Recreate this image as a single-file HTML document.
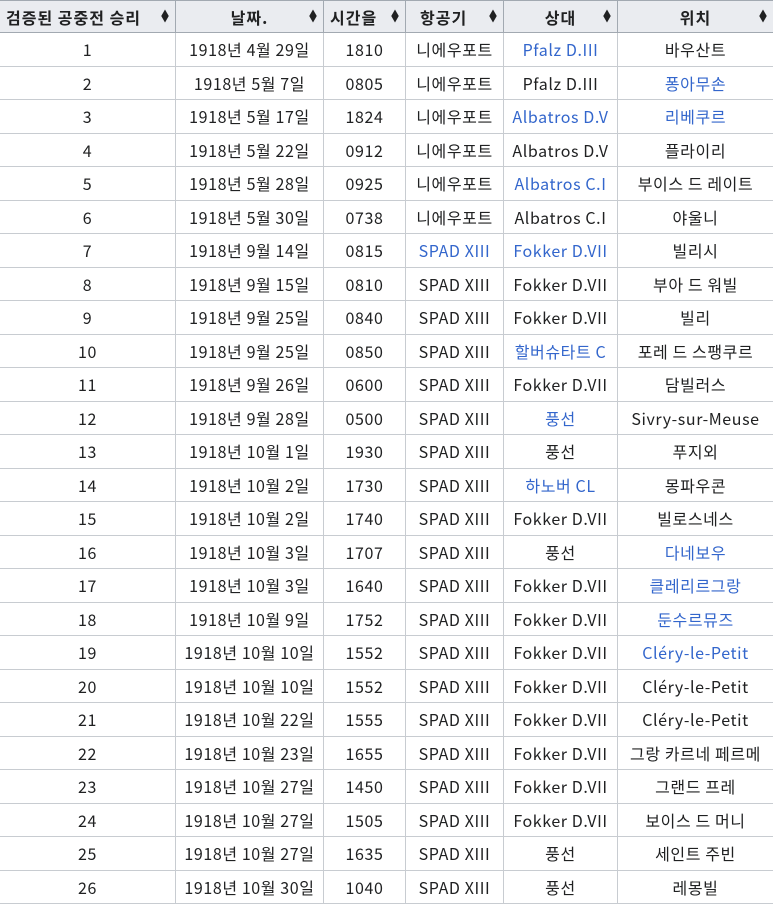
<!DOCTYPE html>
<html><head><meta charset="utf-8"><style>
body{margin:0;background:#fff;overflow:hidden;width:773px;height:903px}
table{border-collapse:collapse;table-layout:fixed;width:774px;margin-left:-1px;font-family:"Noto Sans CJK KR","Liberation Sans",sans-serif;font-size:16px;letter-spacing:0.6px;color:#202122;line-height:20px}
td,th{border:1px solid #c8ccd1;text-align:center;padding:0;height:32.5px;white-space:nowrap;overflow:hidden;vertical-align:middle}
th{background:#eaecf0;border-color:#a2a9b1;height:31px;font-weight:bold;position:relative;letter-spacing:1px}
th span.s{position:absolute;right:6px;top:10px;font-size:8px;line-height:6px;color:#202122;letter-spacing:0}
th.l{text-align:left;padding-left:6px}
a{color:#3366cc;text-decoration:none}
</style></head><body>
<table>
<colgroup><col style="width:176px"><col style="width:148px"><col style="width:82px"><col style="width:98px"><col style="width:114px"><col style="width:156px"></colgroup>
<tr><th class="l">검증된 공중전 승리<span class="s">▲<br>▼</span></th><th>날짜.<span class="s">▲<br>▼</span></th><th class="l">시간을<span class="s">▲<br>▼</span></th><th class="l" style="padding-left:14px">항공기<span class="s">▲<br>▼</span></th><th>상대<span class="s">▲<br>▼</span></th><th>위치<span class="s">▲<br>▼</span></th></tr>
<tr><td>1</td><td>1918년 4월 29일</td><td>1810</td><td>니에우포트</td><td><a>Pfalz D.III</a></td><td>바우산트</td></tr>
<tr><td>2</td><td>1918년 5월 7일</td><td>0805</td><td>니에우포트</td><td>Pfalz D.III</td><td><a>퐁아무손</a></td></tr>
<tr><td>3</td><td>1918년 5월 17일</td><td>1824</td><td>니에우포트</td><td><a>Albatros D.V</a></td><td><a>리베쿠르</a></td></tr>
<tr><td>4</td><td>1918년 5월 22일</td><td>0912</td><td>니에우포트</td><td>Albatros D.V</td><td>플라이리</td></tr>
<tr><td>5</td><td>1918년 5월 28일</td><td>0925</td><td>니에우포트</td><td><a>Albatros C.I</a></td><td>부이스 드 레이트</td></tr>
<tr><td>6</td><td>1918년 5월 30일</td><td>0738</td><td>니에우포트</td><td>Albatros C.I</td><td>야울니</td></tr>
<tr><td>7</td><td>1918년 9월 14일</td><td>0815</td><td><a>SPAD XIII</a></td><td><a>Fokker D.VII</a></td><td>빌리시</td></tr>
<tr><td>8</td><td>1918년 9월 15일</td><td>0810</td><td>SPAD XIII</td><td>Fokker D.VII</td><td>부아 드 워빌</td></tr>
<tr><td>9</td><td>1918년 9월 25일</td><td>0840</td><td>SPAD XIII</td><td>Fokker D.VII</td><td>빌리</td></tr>
<tr><td>10</td><td>1918년 9월 25일</td><td>0850</td><td>SPAD XIII</td><td><a>할버슈타트 C</a></td><td>포레 드 스팽쿠르</td></tr>
<tr><td>11</td><td>1918년 9월 26일</td><td>0600</td><td>SPAD XIII</td><td>Fokker D.VII</td><td>담빌러스</td></tr>
<tr><td>12</td><td>1918년 9월 28일</td><td>0500</td><td>SPAD XIII</td><td><a>풍선</a></td><td>Sivry-sur-Meuse</td></tr>
<tr><td>13</td><td>1918년 10월 1일</td><td>1930</td><td>SPAD XIII</td><td>풍선</td><td>푸지외</td></tr>
<tr><td>14</td><td>1918년 10월 2일</td><td>1730</td><td>SPAD XIII</td><td><a>하노버 CL</a></td><td>몽파우콘</td></tr>
<tr><td>15</td><td>1918년 10월 2일</td><td>1740</td><td>SPAD XIII</td><td>Fokker D.VII</td><td>빌로스네스</td></tr>
<tr><td>16</td><td>1918년 10월 3일</td><td>1707</td><td>SPAD XIII</td><td>풍선</td><td><a>다네보우</a></td></tr>
<tr><td>17</td><td>1918년 10월 3일</td><td>1640</td><td>SPAD XIII</td><td>Fokker D.VII</td><td><a>클레리르그랑</a></td></tr>
<tr><td>18</td><td>1918년 10월 9일</td><td>1752</td><td>SPAD XIII</td><td>Fokker D.VII</td><td><a>둔수르뮤즈</a></td></tr>
<tr><td>19</td><td>1918년 10월 10일</td><td>1552</td><td>SPAD XIII</td><td>Fokker D.VII</td><td><a>Cléry-le-Petit</a></td></tr>
<tr><td>20</td><td>1918년 10월 10일</td><td>1552</td><td>SPAD XIII</td><td>Fokker D.VII</td><td>Cléry-le-Petit</td></tr>
<tr><td>21</td><td>1918년 10월 22일</td><td>1555</td><td>SPAD XIII</td><td>Fokker D.VII</td><td>Cléry-le-Petit</td></tr>
<tr><td>22</td><td>1918년 10월 23일</td><td>1655</td><td>SPAD XIII</td><td>Fokker D.VII</td><td>그랑 카르네 페르메</td></tr>
<tr><td>23</td><td>1918년 10월 27일</td><td>1450</td><td>SPAD XIII</td><td>Fokker D.VII</td><td>그랜드 프레</td></tr>
<tr><td>24</td><td>1918년 10월 27일</td><td>1505</td><td>SPAD XIII</td><td>Fokker D.VII</td><td>보이스 드 머니</td></tr>
<tr><td>25</td><td>1918년 10월 27일</td><td>1635</td><td>SPAD XIII</td><td>풍선</td><td>세인트 주빈</td></tr>
<tr><td>26</td><td>1918년 10월 30일</td><td>1040</td><td>SPAD XIII</td><td>풍선</td><td>레몽빌</td></tr>
</table>
</body></html>
